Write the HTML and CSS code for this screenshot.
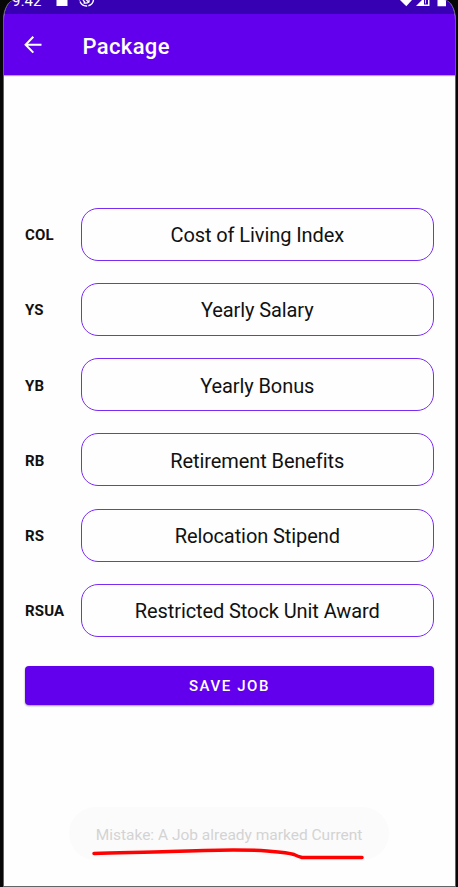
FILE: index.html
```html
<!DOCTYPE html>
<html lang="en">
<head>
<meta charset="utf-8">
<title>Package</title>
<link rel="stylesheet" href="styles.css">
</head>
<body>
<main class="screen">
  <div class="status">
    <span class="time">9:42</span>
    <svg class="notices" width="40" height="13" viewBox="0 0 40 13"><path d="M1.500 0H12.500V6H1.500z" fill="#fff"/><circle cx="31.500" cy="-1" r="7" fill="none" stroke="#fff" stroke-width="1.4" stroke-dasharray="9 1.2"/><path d="M28 0l2 2.500M30.500 -1l3.500 3.500M28.500 2.800q3 1 5.500-.8V-1" fill="none" stroke="#fff" stroke-width="1.3"/></svg>
    <svg class="signals" width="48" height="13" viewBox="0 0 48 13"><path d="M0 0H12L6.300 6.300z" fill="#fff"/><path d="M16 6L22 0H29.500V6z" fill="#fff"/><path d="M24 0H28V4.500H24z" fill="#3700b3"/><path d="M25.500 0V3.500" stroke="#d9caff"/><path d="M37.500 0H46V6.300H37.500z" fill="#fff"/></svg>
  </div>
  <header class="bar">
    <svg width="18" height="18" viewBox="0 0 18 18"><path d="M9.300 .8L1.600 8.700L9.300 16.600M1.600 8.700H17.500" fill="none" stroke="#fff" stroke-width="2"/></svg>
    <h1><span>Package</span></h1>
  </header>
  <form class="form">
    <div class="row"><label>COL</label><div class="field"><span>Cost of Living Index</span></div></div>
    <div class="row"><label>YS</label><div class="field"><span>Yearly Salary</span></div></div>
    <div class="row"><label>YB</label><div class="field"><span>Yearly Bonus</span></div></div>
    <div class="row"><label>RB</label><div class="field"><span>Retirement Benefits</span></div></div>
    <div class="row"><label>RS</label><div class="field"><span>Relocation Stipend</span></div></div>
    <div class="row"><label>RSUA</label><div class="field"><span>Restricted Stock Unit Award</span></div></div>
    <button type="button" class="save">SAVE JOB</button>
  </form>
  <div class="toast"><span>Mistake: A Job already marked Current</span>
    <svg class="underline" width="280" height="20" viewBox="0 0 280 20"><path d="M4 9.500C30 8.300 55 8.800 80 7.500C115 6 160 5.500 177 7C190 8 198 8.500 204 10.500Q208 12.500 212 13.500H272" fill="none" stroke="#f00" stroke-width="3.500" stroke-linecap="round"/></svg>
  </div>
</main>
</body>
</html>
```
FILE: styles.css
```css
* { box-sizing: border-box; }
body {
  margin: 0;
  height: 887px;
  padding: 0 2px 0 3px;
  overflow: hidden;
  background: #080708;
  font-family: Roboto, sans-serif;
  color: #111;
}
.screen {
  display: flex;
  flex-direction: column;
  height: 887px;
  overflow: hidden;
  border: 1px solid #646466;
  border-top: 0;
  border-radius: 12px 12px 0 0 / 20px 20px 0 0;
  background: #fefefe;
}
.status {
  display: flex;
  flex: none;
  height: 14px;
  background: #3700b3;
}
.time {
  width: 51px;
  padding-left: 8px;
  margin-top: -7px;
  font-size: 15px;
  line-height: 16px;
  letter-spacing: .2px;
  color: #fff;
}
.signals { margin-left: auto; margin-right: 7px; }
.bar {
  display: flex;
  flex: none;
  align-items: center;
  height: 61px;
  padding-left: 20px;
  background: #6200ee;
  box-shadow: 0 1px 1px #aaa;
}
.bar h1 {
  margin: 3px 0 0 40.500px;
  font-size: 22px;
  font-weight: 500;
  letter-spacing: .35px;
  color: #fff;
}
.form {
  display: flex;
  flex-direction: column;
  gap: 22.200px;
  padding: 132.800px 21px 0;
}
.row { display: flex; height: 53px; align-items: center; }
label {
  flex: none;
  width: 55.500px;
  padding-top: 2px;
  font-size: 15px;
  font-weight: 700;
  letter-spacing: .15px;
}
.field {
  flex: 1;
  display: flex;
  align-items: center;
  justify-content: center;
  height: 53px;
  padding-top: 2px;
  border: 1px solid #7a2cf2;
  border-radius: 17px;
  font-size: 20px;
  letter-spacing: -.09px;
}
.save {
  height: 39px;
  margin-top: 7px;
  padding: 2px 0 0;
  border: 0;
  border-radius: 4px;
  background: #6200ee;
  box-shadow: 0 1px 2px #0006;
  color: #fff;
  font: 500 15px Roboto, sans-serif;
  letter-spacing: 1.6px;
}
.toast {
  position: relative;
  display: flex;
  align-items: center;
  justify-content: center;
  width: 320px;
  height: 53px;
  margin: auto auto 26px 65px;
  padding-top: 2px;
  border-radius: 27px;
  background: #fbfbfb;
  color: #d3d3d3;
  font-size: 15.500px;
}
.underline { position: absolute; left: 21px; top: 37px; }
```
